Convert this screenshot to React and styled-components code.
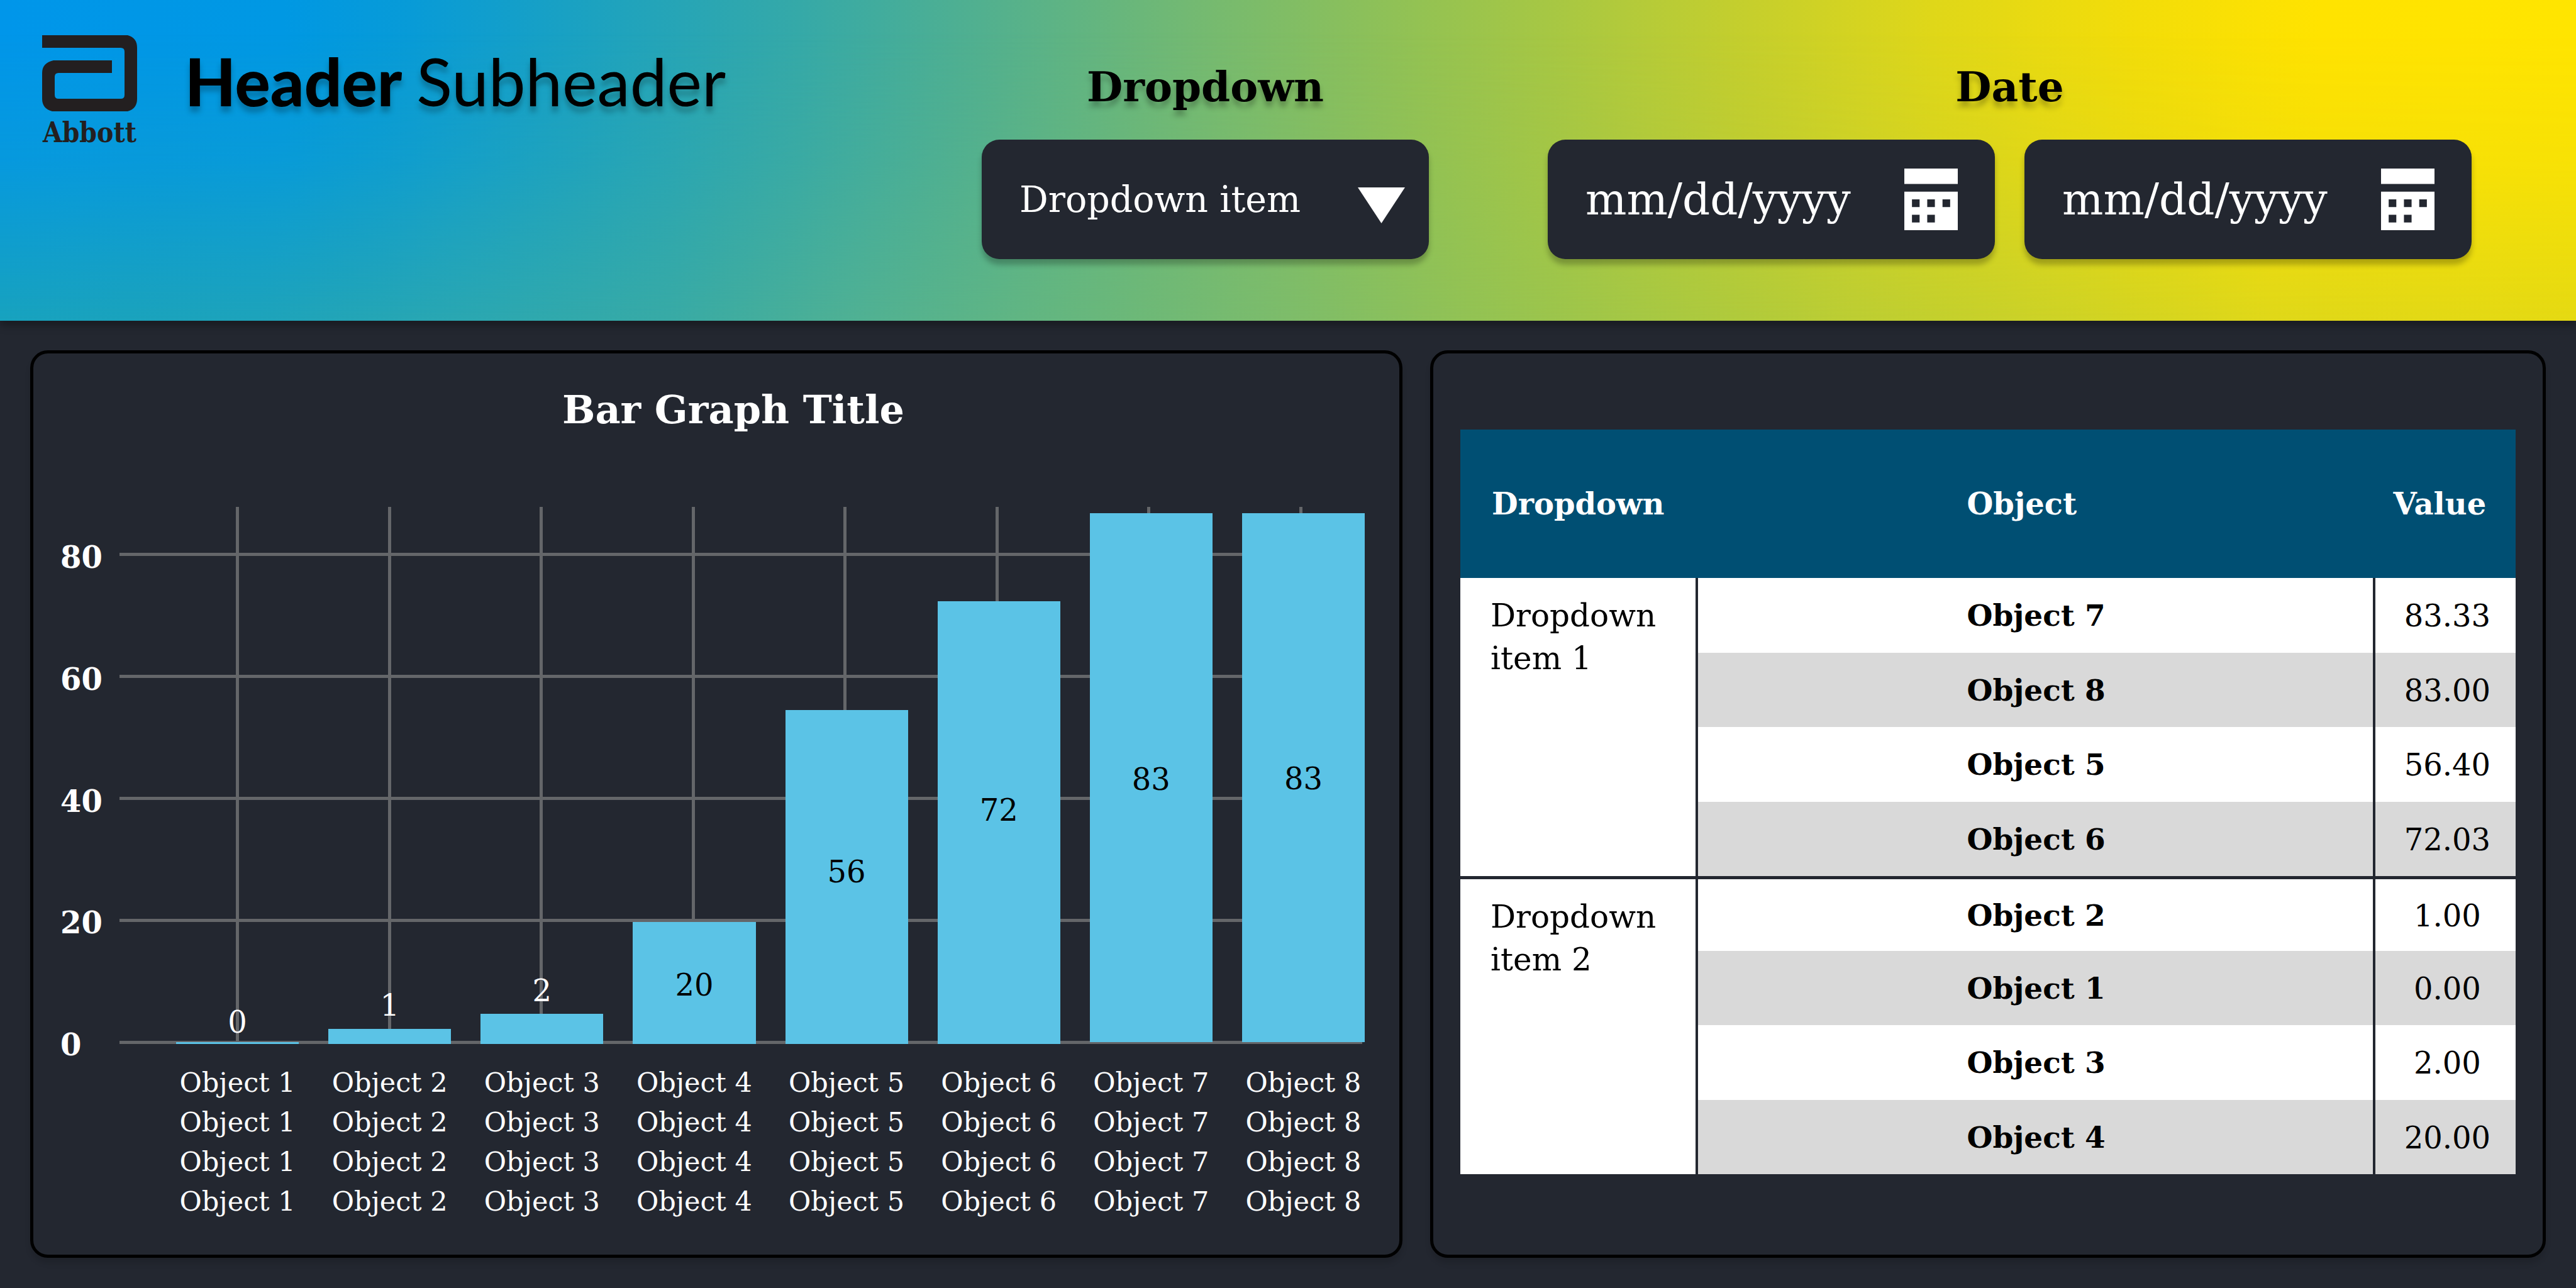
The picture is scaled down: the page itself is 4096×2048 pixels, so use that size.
import React from "react";
import styled, { createGlobalStyle } from "styled-components";

const serif = '"DejaVu Serif", "Liberation Serif", serif';

const GlobalStyle = createGlobalStyle`
  * { box-sizing: border-box; }
  html, body, #root { height: 100%; }
  body { margin: 0; background: #232730; font-family: ${serif}; color: #fff; }
`;

const Page = styled.div`
  min-height: 100%;
  display: flex;
  flex-direction: column;
`;

const Header = styled.header`
  position: relative;
  z-index: 0;
  display: flex;
  min-height: 510px;
  padding: 56px 166px 0 67px;
  color: #000;
  background: linear-gradient(
    90deg, #0096ea 0%, #0098e3 11%, #089bd7 16%, #1ca2c0 23%, #35a9a8 31%, #55b18c 39%, #72b973 46%,
    #93c253 55%, #a6c744 60%, #c6cf2c 68%, #dfd719 75%, #f3dd09 83%, #ffe300 90%, #ffe500 100%
  );
  box-shadow: 0 8px 12px rgba(0, 0, 0, 0.3);
  &::after {
    content: "";
    position: absolute;
    inset: 0;
    z-index: -1;
    background: linear-gradient(
      90deg, #17a2be 0%, #1da3ba 10%, #2ea8ae 20%, #38aaa5 26%, #52b191 34%, #64b67f 41%,
      #7dbc6a 50%, #92c254 57%, #a9c841 65%, #bccd33 72%, #cdd226 80%, #dfd719 88%, #e5d912 100%
    );
    mask-image: linear-gradient(180deg, transparent 10%, rgba(0, 0, 0, 0.28) 50%, #000 100%);
  }
`;

const Brand = styled.div`
  display: flex;
  flex-direction: column;
  align-items: center;
  width: 151px;
  color: #231f20;
  font-family: "DejaVu Serif Condensed", ${serif};
  font-weight: 700;
  font-size: 44px;
  line-height: 68px;
`;

const Heading = styled.h1`
  margin: 0 auto 0 76px;
  padding-top: 8px;
  font-family: Lato, "Open Sans", sans-serif;
  font-size: 105px;
  line-height: 128px;
  font-weight: 900;
  text-shadow: 0 9px 9px rgba(0, 0, 0, 0.25);
`;

const Sub = styled.span`
  font-weight: 400;
`;

const Filters = styled.div`
  display: flex;
  gap: 189px;
`;

const Filter = styled.fieldset`
  border: 0;
  margin: 0;
  padding: 0;
  min-width: 0;
  display: flex;
  flex-direction: column;
`;

const FilterName = styled.label`
  height: 166px;
  padding-top: 42px;
  text-align: center;
  font-size: 66px;
  line-height: 80px;
  font-weight: 700;
  text-shadow: 0 9px 9px rgba(0, 0, 0, 0.25);
`;

const Fields = styled.div`
  display: flex;
  gap: 47px;
`;

const Field = styled.div`
  position: relative;
  display: flex;
  align-items: center;
  width: 711px;
  height: 190px;
  border-radius: 28px;
  background: #232730;
  box-shadow: 0 9px 9px rgba(0, 0, 0, 0.25);
`;

const Select = styled.select`
  appearance: none;
  width: 100%;
  height: 100%;
  padding: 0 160px 0 60px;
  border: 0;
  border-radius: 28px;
  background: transparent;
  color: #fff;
  font-family: ${serif};
  font-size: 57px;
`;

const Arrow = styled.svg`
  position: absolute;
  right: 38px;
  top: 76px;
  width: 75px;
  height: 57px;
  pointer-events: none;
`;

const DateInput = styled.input`
  flex: 1;
  min-width: 0;
  height: 100%;
  padding: 0 0 0 60px;
  border: 0;
  background: transparent;
  color: #fff;
  font-family: ${serif};
  font-size: 69px;
  &::placeholder { color: #fff; opacity: 1; }
`;

const IconButton = styled.button`
  display: flex;
  margin: 0 59px 0 0;
  padding: 0;
  border: 0;
  background: none;
`;

const Main = styled.main`
  flex: 1;
  display: grid;
  grid-template-columns: 2182fr 1774fr;
  gap: 44px;
  padding: 47px 48px 48px;
`;

const Panel = styled.section`
  display: flex;
  flex-direction: column;
  min-width: 0;
  border: 5px solid #000;
  border-radius: 28px;
  padding: ${(p) => p.$pad};
  box-shadow: 0 9px 9px rgba(0, 0, 0, 0.12);
`;

const Title = styled.h2`
  margin: 0 0 114px 66px;
  text-align: center;
  font-size: 62px;
  line-height: 80px;
  font-weight: 700;
`;

const Chart = styled.div`
  display: grid;
  grid-template-columns: 94px 1fr;
  flex: 1;
  grid-template-rows: 1fr auto;
`;

const Axis = styled.div`
  display: flex;
  flex-direction: column;
  justify-content: space-between;
  padding-top: 52px;
  margin-bottom: -29px;
  font-size: 48px;
  line-height: 56px;
  font-weight: 700;
`;

const Plot = styled.div`
  position: relative;
  display: grid;
`;

const layer = `
  grid-area: 1 / 1;
  display: flex;
  justify-content: space-between;
`;

const Rows = styled.div`
  ${layer}
  flex-direction: column;
  padding: 73px 4px 0 0;
`;

const RowLine = styled.div`
  height: 5px;
  background: #646669;
`;

const Columns = styled.div`
  ${layer}
  padding: 0 99px 0 185px;
`;

const ColumnLine = styled.div`
  width: 5px;
  background: #646669;
`;

const Bars = styled.div`
  ${layer}
  align-items: stretch;
  gap: 47px;
  padding-left: 90px;
`;

const Slot = styled.div`
  position: relative;
  flex: 1;
  display: flex;
  flex-direction: column;
  justify-content: flex-end;
`;

const Bar = styled.div`
  background: #5bc3e6;
  margin-bottom: ${(p) => (p.$raised ? "3px" : 0)};
`;

const BarValue = styled.span`
  position: absolute;
  left: 0;
  right: 0;
  text-align: center;
  font-size: 48px;
  line-height: 56px;
  color: ${(p) => (p.$inside ? "#000" : "#fff")};
`;

const Labels = styled.div`
  grid-column: 2;
  display: flex;
  gap: 47px;
  padding: 30px 0 0 90px;
`;

const Label = styled.div`
  flex: 1;
  min-width: 0;
  display: flex;
  flex-direction: column;
  align-items: center;
  white-space: nowrap;
  font-size: 43px;
  line-height: 63px;
`;

const Table = styled.table`
  flex: 1;
  width: 100%;
  border-collapse: separate;
  border-spacing: 0;
  table-layout: fixed;
  color: #000;
  font-size: 48px;
  line-height: 68px;
`;

const HeadCell = styled.th`
  height: 236px;
  padding: 0 ${(p) => (p.$align ? 18 : 0)}px 0 ${(p) => p.$indent || 0}px;
  background: #004f73;
  color: #fff;
  font-weight: 700;
  text-align: ${(p) => p.$align || "left"};
`;

const GroupCell = styled.th`
  padding: 26px 0 0 48px;
  vertical-align: top;
  text-align: left;
  font-size: 50px;
  font-weight: 400;
  background: #fff;
  border-right: 4px solid #232730;
  border-top: ${(p) => (p.$rule ? "5px solid #232730" : 0)};
`;

const Row = styled.tr`
  height: 118px;
`;

const Cell = styled.td`
  padding: 2px 0 0 ${(p) => p.$indent}px;
  background: ${(p) => (p.$shade ? "#d9d9d9" : "#fff")};
  border-top: ${(p) => (p.$rule ? "5px solid #232730" : 0)};
  border-right: ${(p) => (p.$edge ? "4px solid #232730" : 0)};
  font-size: ${(p) => (p.$strong ? 47 : 48)}px;
  font-weight: ${(p) => (p.$strong ? 700 : 400)};
  text-align: ${(p) => (p.$strong ? "left" : "center")};
`;

const TOP = 87.9;

const bars = [
  { name: "Object 1", value: 0, height: 0.3, at: 3.6 },
  { name: "Object 2", value: 1, height: 2.5, at: 6.4 },
  { name: "Object 3", value: 2, height: 4.9, at: 8.8 },
  { name: "Object 4", value: 20, height: 20, at: 9.7, inside: true },
  { name: "Object 5", value: 56, height: 54.7, at: 28.2, inside: true },
  { name: "Object 6", value: 72, height: 72.5, at: 38.3, inside: true },
  { name: "Object 7", value: 83, height: 86.6, at: 43.3, inside: true, raised: true },
  { name: "Object 8", value: 83, height: 86.6, at: 43.4, inside: true, raised: true },
];

const groups = [
  { name: "Dropdown item 1", rows: [["Object 7", "83.33"], ["Object 8", "83.00"], ["Object 5", "56.40"], ["Object 6", "72.03"]] },
  { name: "Dropdown item 2", rows: [["Object 2", "1.00"], ["Object 1", "0.00"], ["Object 3", "2.00"], ["Object 4", "20.00"]] },
];

const ticks = [80, 60, 40, 20, 0];

function Logo() {
  return (
    <svg width="151" height="121" viewBox="0 0 151 121" aria-hidden="true">
      <path
        fill="#231f20"
        d="M0 0H136Q151 4 151 20V101Q151 117 136 121H16Q0 117 0 101V60Q0 44 18 40H111V60H26Q20 60 20 66V95Q20 101 26 101H125Q131 101 131 95V26Q131 20 125 20H0Z"
      />
    </svg>
  );
}

function CalendarIcon() {
  return (
    <svg width="85" height="98" viewBox="0 0 7 8" preserveAspectRatio="none" aria-hidden="true">
      <path fill="#fff" fillRule="evenodd" d="M0 0H7V2H0ZM0 3H7V8H0ZM1 4V5H2V4ZM3 4V5H4V4ZM5 4V5H6V4ZM1 6V7H2V6ZM3 6V7H4V6Z" />
    </svg>
  );
}

function DateField({ id, label }) {
  return (
    <Field>
      <DateInput id={id} type="text" placeholder="mm/dd/yyyy" aria-label={label} />
      <IconButton type="button" aria-label={"Open calendar: " + label}>
        <CalendarIcon />
      </IconButton>
    </Field>
  );
}

export default function App() {
  return (
    <>
      <GlobalStyle />
      <Page>
        <Header>
          <Brand>
            <Logo />
            Abbott
          </Brand>
          <Heading>
            Header <Sub>Subheader</Sub>
          </Heading>
          <Filters>
            <Filter>
              <FilterName htmlFor="item">Dropdown</FilterName>
              <Fields>
                <Field>
                  <Select id="item">
                    <option>Dropdown item</option>
                  </Select>
                  <Arrow viewBox="0 0 75 57" aria-hidden="true">
                    <path fill="#fff" d="M0 0H75L37.5 57Z" />
                  </Arrow>
                </Field>
              </Fields>
            </Filter>
            <Filter>
              <FilterName htmlFor="from">Date</FilterName>
              <Fields>
                <DateField id="from" label="Start date" />
                <DateField id="to" label="End date" />
              </Fields>
            </Filter>
          </Filters>
        </Header>
        <Main>
          <Panel $pad="50px 55px 53px 43px">
            <Title>Bar Graph Title</Title>
            <Chart>
              <Axis>
                {ticks.map((t) => (
                  <span key={t}>{t}</span>
                ))}
              </Axis>
              <Plot>
                <Columns>
                  {bars.map((b) => (
                    <ColumnLine key={b.name} />
                  ))}
                </Columns>
                <Rows>
                  {ticks.map((t) => (
                    <RowLine key={t} />
                  ))}
                </Rows>
                <Bars>
                  {bars.map((b) => (
                    <Slot key={b.name}>
                      <Bar $raised={b.raised} style={{ height: `${(b.height / TOP) * 100}%` }} />
                      <BarValue $inside={b.inside} style={{ bottom: `calc(${(b.at / TOP) * 100}% - 28px)` }}>
                        {b.value}
                      </BarValue>
                    </Slot>
                  ))}
                </Bars>
              </Plot>
              <Labels>
                {bars.map((b) => (
                  <Label key={b.name}>
                    {[0, 1, 2, 3].map((n) => (
                      <span key={n}>{b.name}</span>
                    ))}
                  </Label>
                ))}
              </Labels>
            </Chart>
          </Panel>
          <Panel $pad="121px 43px 128px 43px">
            <Table>
              <colgroup>
                <col style={{ width: "22.5%" }} />
                <col style={{ width: "64.2%" }} />
                <col style={{ width: "13.3%" }} />
              </colgroup>
              <thead>
                <tr>
                  <HeadCell $indent={50}>Dropdown</HeadCell>
                  <HeadCell $indent={428}>Object</HeadCell>
                  <HeadCell $align="center">Value</HeadCell>
                </tr>
              </thead>
              {groups.map((g, gi) => (
                <tbody key={g.name}>
                  {g.rows.map(([name, value], i) => {
                    const rule = gi > 0 && i === 0;
                    return (
                      <Row key={name}>
                        {i === 0 && (
                          <GroupCell rowSpan={4} scope="rowgroup" $rule={rule}>
                            {g.name}
                          </GroupCell>
                        )}
                        <Cell $indent={428} $strong $edge $shade={i % 2 === 1} $rule={rule}>
                          {name}
                        </Cell>
                        <Cell $indent={6} $shade={i % 2 === 1} $rule={rule}>
                          {value}
                        </Cell>
                      </Row>
                    );
                  })}
                </tbody>
              ))}
            </Table>
          </Panel>
        </Main>
      </Page>
    </>
  );
}
